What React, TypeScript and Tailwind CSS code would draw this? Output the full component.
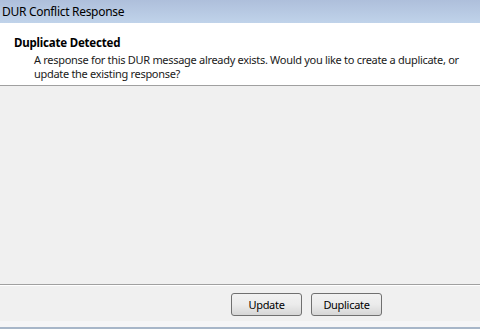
export default function App() {
  return (
    <div className="w-[480px] h-[329px] flex flex-col bg-[#f0f0f0] font-['Noto_Sans',sans-serif] text-[11px] tracking-[-0.3px] text-black overflow-hidden">
      {/* title bar */}
      <div className="h-[23px] shrink-0 bg-gradient-to-b from-[#aebfdb] to-[#c0d3ea] flex items-center pl-[2px]">
        <span className="leading-none text-[12px] tracking-[-0.3px]">DUR Conflict Response</span>
      </div>

      {/* header */}
      <div className="h-[63px] shrink-0 bg-white border-b border-[#a0a0a0] pt-[12px] pl-[14px]">
        <div className="font-bold leading-[16px] text-[11.5px] tracking-[-0.2px]">Duplicate Detected</div>
        <p className="pl-[20px] mt-[2px] leading-[14px] whitespace-nowrap text-[#1a1a1a]">
          A response for this DUR message already exists. Would you like to create a duplicate, or
          <br />
          update the existing response?
        </p>
      </div>

      {/* content */}
      <div className="flex-1 bg-[#f0f0f0]" />

      {/* button bar */}
      <div className="h-[45px] shrink-0 border-t border-[#a0a0a0] flex flex-col">
        <div className="h-px bg-white" />
        <div className="flex-1 flex items-start pt-[7px] pl-[231px] gap-[9px]">
          <button className="w-[71px] h-[23px] rounded-[3px] border border-[#707070] bg-gradient-to-b from-[#f2f2f2] via-[#ebebeb] to-[#d6d6d6] leading-none">
            Update
          </button>
          <button className="w-[71px] h-[23px] rounded-[3px] border border-[#707070] bg-gradient-to-b from-[#f2f2f2] via-[#ebebeb] to-[#d6d6d6] leading-none">
            Duplicate
          </button>
        </div>
        <div className="h-[6px] bg-[#f5f5f7]" />
        <div className="h-[2px] bg-[#a7b6c9]" />
      </div>
    </div>
  );
}
